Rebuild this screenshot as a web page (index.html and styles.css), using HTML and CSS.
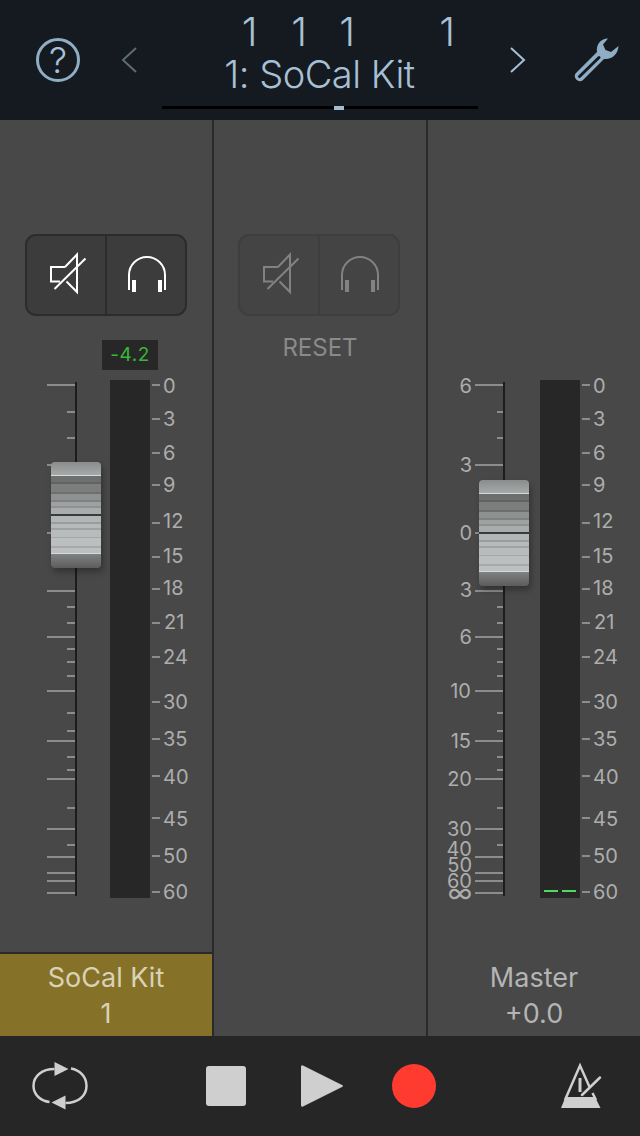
FILE: index.html
```html
<!DOCTYPE html>
<html>
<head>
  <title>Mixer</title>
  <link rel="stylesheet" href="styles.css">
</head>
<body>

  <div class="header">
    <svg class="help" width="44" height="44" viewBox="36 38 44 44">
      <circle cx="58" cy="60" r="20.500" fill="none" stroke="currentColor" stroke-width="3"/>
      <text x="58" y="73" text-anchor="middle" font-size="36" fill="#a8c0d6">?</text>
    </svg>
    <svg class="prev" width="15" height="26" viewBox="122 47 15 26">
      <path d="M136 48 L123 60 L136 72" fill="none" stroke="currentColor" stroke-width="2"/>
    </svg>
    <div class="title">
      <div class="counter">
        <span>1</span><span>1</span><span>1</span><span></span><span>1</span>
      </div>
      <div class="track-name">1: SoCal Kit</div>
      <div class="progress"><div class="handle"></div></div>
    </div>
    <svg class="next" width="15" height="26" viewBox="510 47 15 26">
      <path d="M511 48 L524 60 L511 72" fill="none" stroke="currentColor" stroke-width="2"/>
    </svg>
    <svg class="wrench" width="46" height="46" viewBox="573 37 46 46">
      <path d="M608 38.500 C600 38.500 596 45 597 52 L576 73 C572 77 578.500 84 583 80 L604 59 C612 60 618 54 618.500 46 L611 52 L605.500 50 L603 44.500 Z" fill="currentColor"/>
      <path d="M579.500 76.500 L599 57.500" stroke="#141a1f" stroke-width="3" stroke-linecap="round"/>
    </svg>
  </div>

  <div class="strips">

    <div class="strip">
      <div class="btn-group">
        <div class="btn">
          <svg width="78" height="78" viewBox="27 236 78 78" fill="none" stroke="currentColor" stroke-width="2">
            <path d="M65 267 H51 V281.500 H60 M66.500 281.500 L77 292 V272 M77 274 V254.500 L65 267"/>
            <path d="M85.500 258.500 L54.500 289"/>
          </svg>
        </div>
        <div class="btn">
          <svg width="78" height="78" viewBox="107 236 78 78" fill="none" stroke="currentColor" stroke-width="2">
            <path d="M129 290 V275 A18 18 0 0 1 165 275 V290"/>
            <path d="M134 280 V292 M160 280 V292" stroke-width="4"/>
          </svg>
        </div>
      </div>
      <div class="peak">-4.2</div>
      <div class="mixer">
        <svg width="212" height="520" viewBox="0 380 212 520">
          <rect class="rail" x="75" y="382" width="2" height="514"/>
          <path class="ticks" d="M47 385H75M67 412H75M67 438H75M47 465H75M47 533H75M47 591H75M67 607H75M67 623H75M47 637H75M67 649H75M67 662H75M67 676H75M47 691H75M67 713H75M67 731H75M47 741H75M67 757H75M67 770H75M47 779H75M67 808H75M47 829H75M67 845H75M47 857H75M47 873H75M47 881H75M47 893H75"/>
          <rect class="meter" x="110" y="380" width="40" height="518"/>
          <path class="ticks" d="M152 385H160M152 419H160M152 453H160M152 485H160M152 523H160M152 557H160M152 589H160M152 623H160M152 657H160M152 702H160M152 739H160M152 776H160M152 818H160M152 856H160M152 892H160"/>
          <g class="labels">
            <text x="163" y="393">0</text>
            <text x="163" y="426">3</text>
            <text x="163" y="460">6</text>
            <text x="163" y="492">9</text>
            <text x="163" y="528">12</text>
            <text x="163" y="563">15</text>
            <text x="163" y="595">18</text>
            <text x="164" y="629">21</text>
            <text x="163" y="664">24</text>
            <text x="163" y="709">30</text>
            <text x="163" y="746">35</text>
            <text x="163" y="784">40</text>
            <text x="163" y="826">45</text>
            <text x="163" y="863">50</text>
            <text x="163" y="899">60</text>
          </g>
        </svg>
        <div class="fader fader-track"></div>
      </div>
      <div class="name selected">
        <div>SoCal Kit</div>
        <div>1</div>
      </div>
    </div>

    <div class="strip">
      <div class="btn-group dim">
        <div class="btn">
          <svg width="78" height="78" viewBox="27 236 78 78" fill="none" stroke="currentColor" stroke-width="2">
            <path d="M65 267 H51 V281.500 H60 M66.500 281.500 L77 292 V272 M77 274 V254.500 L65 267"/>
            <path d="M85.500 258.500 L54.500 289"/>
          </svg>
        </div>
        <div class="btn">
          <svg width="78" height="78" viewBox="107 236 78 78" fill="none" stroke="currentColor" stroke-width="2">
            <path d="M129 290 V275 A18 18 0 0 1 165 275 V290"/>
            <path d="M134 280 V292 M160 280 V292" stroke-width="4"/>
          </svg>
        </div>
      </div>
      <div class="reset">RESET</div>
    </div>

    <div class="strip">
      <div class="mixer master">
        <svg width="212" height="520" viewBox="428 380 212 520">
          <rect class="rail" x="503" y="382" width="2" height="514"/>
          <path class="ticks" d="M475 385H503M497 412H503M497 438H503M475 465H503M475 533H503M475 591H503M497 607H503M497 623H503M475 637H503M497 649H503M497 662H503M497 676H503M475 691H503M497 713H503M497 731H503M475 741H503M497 757H503M497 770H503M475 779H503M497 808H503M475 829H503M497 845H503M475 857H503M475 873H503M475 881H503M475 893H503"/>
          <g class="labels end">
            <text x="472" y="393">6</text>
            <text x="472" y="472">3</text>
            <text x="472" y="540">0</text>
            <text x="472" y="597">3</text>
            <text x="472" y="644">6</text>
            <text x="471" y="698">10</text>
            <text x="471" y="748">15</text>
            <text x="472" y="786">20</text>
            <text x="472" y="836">30</text>
            <text x="472" y="856">40</text>
            <text x="472" y="872">50</text>
            <text x="472" y="888">60</text>
            <text class="inf" x="472" y="902">∞</text>
          </g>
          <rect class="meter" x="540" y="380" width="40" height="518"/>
          <path class="level" d="M544 891H558M562 891H576"/>
          <path class="ticks" d="M582 385H590M582 419H590M582 453H590M582 485H590M582 523H590M582 557H590M582 589H590M582 623H590M582 657H590M582 702H590M582 739H590M582 776H590M582 818H590M582 856H590M582 892H590"/>
          <g class="labels">
            <text x="593" y="393">0</text>
            <text x="593" y="426">3</text>
            <text x="593" y="460">6</text>
            <text x="593" y="492">9</text>
            <text x="593" y="528">12</text>
            <text x="593" y="563">15</text>
            <text x="593" y="595">18</text>
            <text x="594" y="629">21</text>
            <text x="593" y="664">24</text>
            <text x="593" y="709">30</text>
            <text x="593" y="746">35</text>
            <text x="593" y="784">40</text>
            <text x="593" y="826">45</text>
            <text x="593" y="863">50</text>
            <text x="593" y="899">60</text>
          </g>
        </svg>
        <div class="fader fader-master"></div>
      </div>
      <div class="name">
        <div>Master</div>
        <div>+0.0</div>
      </div>
    </div>

  </div>

  <div class="transport">
    <svg class="loop" width="58" height="50" viewBox="31 1061 58 50">
      <path d="M54.500 1069 C42 1069 33.500 1076 33.500 1086 C33.500 1095 41 1101 49.500 1102" fill="none" stroke="currentColor" stroke-width="2.500"/>
      <path d="M71 1068.500 C80 1070 86.500 1077 86.500 1086 C86.500 1096 78 1103 65.500 1103" fill="none" stroke="currentColor" stroke-width="2.500"/>
      <path d="M54.500 1062 L68.500 1069 L54.500 1076 Z M65.500 1095.500 L51.500 1102.500 L65.500 1109.500 Z" fill="currentColor"/>
    </svg>
    <div class="stop"></div>
    <svg class="play" width="44" height="46" viewBox="300 1063 44 46">
      <path d="M303 1065.500 L342 1085 Q344 1086 342 1087 L303 1106.500 Q301 1107.500 301 1105 V1067 Q301 1064.500 303 1065.500 Z" fill="currentColor"/>
    </svg>
    <div class="record"></div>
    <svg class="metronome" width="42" height="46" viewBox="560 1063 42 46">
      <path d="M565 1100 L580 1065.500 L590 1088 M592.500 1093 L596 1100" fill="none" stroke="currentColor" stroke-width="2.500"/>
      <path d="M565.500 1097 H595 L600.500 1108 H561 Z" fill="currentColor"/>
      <path d="M580 1078 V1092" stroke="currentColor" stroke-width="3"/>
      <path d="M582 1095 L600 1077.500" stroke="currentColor" stroke-width="2.500" stroke-linecap="round"/>
    </svg>
  </div>

</body>
</html>
```

FILE: styles.css
```css
* {
  box-sizing: border-box;
}

body {
  margin: 0;
  width: 640px;
  height: 1136px;
  overflow: hidden;
  background-color: #262626;
  font-family: Inter, 'Noto Sans', sans-serif;
}

svg {
  display: block;
  overflow: visible;
}

.header {
  height: 120px;
  background-color: #141a1f;
  color: #a8c0d6;
  position: relative;
  display: flex;
  align-items: flex-start;
}

.help {
  color: #8fadc4;
  margin: 38px 0 0 36px;
}

.help text {
  font-weight: 300;
}

.prev {
  color: #5d6b75;
  margin: 47px 0 0 42px;
}

.title {
  width: 373px;
  flex: none;
}

.counter {
  display: grid;
  grid-template-columns: 51px 48px 48px 51px 50px;
  justify-content: start;
  margin: 13px 0 0 87px;
  height: 38px;
  font-size: 40px;
  line-height: 38px;
  font-weight: 300;
  text-align: center;
}

.track-name {
  font-size: 38px;
  line-height: 44px;
  font-weight: 300;
  text-align: center;
  margin-top: 1px;
  padding-right: 8px;
  letter-spacing: -0.5px;
}

.progress {
  width: 316px;
  height: 3px;
  margin: 10px 0 0 25px;
  background-color: #000;
  display: flex;
}

.handle {
  width: 10px;
  height: 4px;
  margin-left: 172px;
  background-color: #a3bcd4;
}

.next {
  margin-top: 47px;
}

.wrench {
  color: #8fadc4;
  margin: 37px 0 0 48px;
}

.strips {
  display: flex;
  height: 916px;
  background-color: #2a2a2a;
}

.strip {
  width: 212px;
  flex: none;
  background-color: #484848;
  display: flex;
  flex-direction: column;
  position: relative;
}

.strip + .strip {
  margin-left: 2px;
}

.btn-group {
  width: 162px;
  height: 82px;
  margin: 114px 0 0 25px;
  display: flex;
  border: 2px solid #2c2c2c;
  border-radius: 11px;
  background-color: #3c3c3c;
  color: #fff;
  overflow: hidden;
}

.btn {
  width: 78px;
  flex: none;
}

.btn + .btn {
  border-left: 2px solid #2c2c2c;
  width: 80px;
}

.btn-group.dim {
  margin-left: 24px;
  border-color: #3e3e3e;
  background-color: #444;
  color: #828282;
}

.btn-group.dim .btn + .btn {
  border-color: #3e3e3e;
}

.peak {
  width: 56px;
  height: 30px;
  margin: 24px 0 0 102px;
  background-color: #272727;
  color: #37b737;
  font-size: 19px;
  line-height: 30px;
  letter-spacing: 0.5px;
  text-align: center;
}

.reset {
  margin-top: 18px;
  text-align: center;
  color: #8a8a8a;
  font-size: 24px;
  line-height: 28px;
}

.mixer {
  position: relative;
  height: 520px;
  margin-top: 10px;
}

.mixer.master {
  margin-top: 260px;
}

.rail {
  fill: #1c1c1c;
}

.meter {
  fill: #272727;
}

.ticks {
  fill: none;
  stroke: #8c8c8c;
  stroke-width: 2;
}

.level {
  fill: none;
  stroke: #50d860;
  stroke-width: 2;
}

.labels {
  fill: #adadad;
  font-size: 20px;
}

.labels.end {
  text-anchor: end;
}

.labels .inf {
  font-size: 26px;
}

.fader {
  position: absolute;
  left: 51px;
  width: 50px;
  height: 106px;
  border-radius: 4px;
  box-shadow: 2px 4px 6px rgba(0, 0, 0, 0.3);
  background: linear-gradient(to bottom,
    #8b8d8d 0, #a6a9a9 13px,
    #d5dada 13px, #d5dada 14px,
    #6c6f6d 14px, #6c6f6d 20px,
    #606360 20px, #606360 22px,
    #7b7e7c 22px, #7b7e7c 30px,
    #6c6f6d 30px, #6c6f6d 32px,
    #8e9190 32px, #8e9190 38px,
    #7e817f 38px, #7e817f 40px,
    #9fa2a2 40px, #9fa2a2 44px,
    #8e9190 44px, #8e9190 46px,
    #a8acac 46px, #a8acac 52px,
    #3a3b3b 52px, #3a3b3b 54px,
    #b2b6b6 54px, #b2b6b6 60px,
    #9a9d9d 60px, #9a9d9d 62px,
    #b6baba 62px, #b6baba 66px,
    #a0a3a3 66px, #a0a3a3 68px,
    #b8bcbc 68px, #b8bcbc 75px,
    #a5a8a8 75px, #a5a8a8 76px,
    #bbbfbf 76px, #bbbfbf 84px,
    #a7aaaa 84px, #a7aaaa 86px,
    #bcc0c0 86px, #bcc0c0 91px,
    #d5dada 91px, #d5dada 92px,
    #808181 92px, #5c5c5c 106px);
}

.fader-track {
  top: 82px;
}

.fader-master {
  top: 100px;
}

.name {
  margin-top: auto;
  height: 82px;
  padding-top: 6px;
  text-align: center;
  color: #b4b4b4;
  font-size: 27px;
  line-height: 36px;
}

.name.selected {
  background-color: #857228;
  color: #d8d2b6;
  box-shadow: 0 -2px 0 #2a2a2a;
}

.transport {
  height: 100px;
  background-color: #262626;
  color: #cfcfcf;
  display: flex;
  align-items: center;
  padding-left: 31px;
}

.stop {
  width: 40px;
  height: 40px;
  margin-left: 117px;
  border-radius: 3px;
  background-color: #cfcfcf;
}

.play {
  margin-left: 54px;
}

.record {
  width: 44px;
  height: 44px;
  margin-left: 48px;
  border-radius: 50%;
  background-color: #ff3b30;
}

.metronome {
  margin-left: 124px;
}
```
